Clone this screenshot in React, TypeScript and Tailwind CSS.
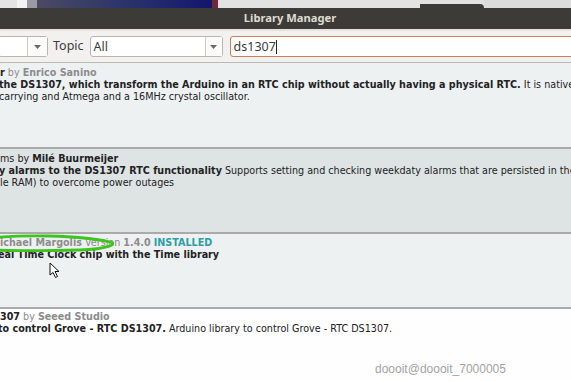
import React from "react";

function Arrow() {
  return (
    <svg width="7" height="4" viewBox="0 0 7 4" className="fill-[#6a6a6a]">
      <path d="M0 0 L7 0 L3.5 4 Z" />
    </svg>
  );
}

function Row({
  bg,
  h,
  pt,
  children,
}: {
  bg: string;
  h: string;
  pt: string;
  children: React.ReactNode;
}) {
  return (
    <div className={`${bg} ${h} ${pt} relative border-b-2 border-[#a9abab] overflow-hidden`}>
      {children}
    </div>
  );
}

export default function App() {
  const line = "h-[12px] leading-[12px] whitespace-nowrap";

  return (
    <div className="w-[571px] h-[381px] overflow-hidden relative bg-white text-[9.6px] text-[#222] [font-family:'DejaVu_Sans',sans-serif]">
      {/* desktop strip behind the window */}
      <div className="h-[8px] flex">
        <div className="w-[17px] bg-[#e4e4e4]" />
        <div className="w-[10px] bg-[#f3f3f3]" />
        <div className="w-[10px] bg-[#9a9aa2]" />
        <div className="w-[175px] bg-gradient-to-r from-[#4b4a63] to-[#14136e]" />
        <div className="w-[6px] bg-[#6b2a34]" />
        <div className="w-[266px] bg-[#e2e2e2] flex items-end">
          <div className="h-[4px] ml-[202px] w-[64px] bg-[#3c3b37] rounded-tr-[4px]" />
        </div>
        <div className="flex-1 bg-[#dcdcdc]" />
      </div>

      {/* title bar */}
      <div className="h-[21px] bg-[#3c3b37] flex items-center justify-center pl-[9px]">
        <span className="text-[11.2px] font-bold text-[#dfdbd2] [font-family:'Noto_Sans',sans-serif]">
          Library Manager
        </span>
      </div>
      <div className="h-[2px] bg-[#e6e3df]" />

      {/* toolbar */}
      <div className="h-[32px] bg-[#f2f1f0] flex items-center text-[12.5px] text-[#3c3c3c] [font-family:'Noto_Sans',sans-serif] border-b border-[#bdbab5]">
        <div className="-ml-[2px] w-[50px] h-[21px] flex bg-white border border-[#b9b6b1] rounded-[3px]">
          <div className="w-[29px] border-r border-[#cfccc8]" />
          <div className="flex-1 flex items-center justify-center bg-[#fbfbfa]">
            <Arrow />
          </div>
        </div>
        <span className="ml-[5px]">Topic</span>
        <div className="ml-[6px] w-[133px] h-[21px] flex bg-white border border-[#b9b6b1] rounded-[3px]">
          <div className="w-[115px] border-r border-[#cfccc8] pl-[3px] leading-[19px]">All</div>
          <div className="flex-1 flex items-center justify-center bg-[#fbfbfa]">
            <Arrow />
          </div>
        </div>
        <div className="ml-[7px] flex-1 -mr-[4px] h-[21px] bg-white border border-[#c5805c] rounded-[3px] pl-[3px] leading-[19px] flex items-center">
          <span>ds1307</span>
          <span className="w-[1px] h-[14px] bg-[#222]" />
        </div>
      </div>

      {/* results */}
      <Row bg="bg-[#eef1f2]" h="h-[86px]" pt="pt-[4px]">
        <div className={line}>
          <b>r</b> <span className="text-[#8c8c8c]">by</span>{" "}
          <b className="text-[#8c8c8c]">Enrico Sanino</b>
        </div>
        <div className={`${line} -ml-[1px]`}>
          <b>the DS1307, which transform the Arduino in an RTC chip without actually having a physical RTC.</b>{" "}
          It is natively supported on any Arduino
        </div>
        <div className={`${line} -ml-[1px]`}>carrying and Atmega and a 16MHz crystal oscillator.</div>
      </Row>

      <Row bg="bg-[#dee4e4]" h="h-[85px]" pt="pt-[4px]">
        <div className={line}>
          ms by <b>Milé Buurmeijer</b>
        </div>
        <div className={`${line} -ml-[1px]`}>
          <b>y alarms to the DS1307 RTC functionality</b> Supports setting and checking weekdaty alarms that are persisted in the
        </div>
        <div className={line}>le RAM) to overcome power outages</div>
      </Row>

      <Row bg="bg-[#eef1f1]" h="h-[75px]" pt="pt-[3px]">
        <div className={line}>
          <b className="text-[#8c8c8c]">ichael Margolis</b>{" "}
          <span className="text-[#8c8c8c]">Version</span>{" "}
          <b className="text-[#8c8c8c]">1.4.0</b>{" "}
          <b className="text-[#2b9ea6]">INSTALLED</b>
        </div>
        <div className={`${line} -ml-[2px]`}>
          <b>eal Time Clock chip with the Time library</b>
        </div>

        {/* hand drawn highlight */}
        <svg
          className="absolute left-0 top-0"
          width="120"
          height="24"
          viewBox="0 0 120 24"
        >
          <path
            d="M-20 5 C 20 0, 80 1, 110 8 C 118 10, 108 15, 80 16 C 40 17, 0 17, -20 15"
            fill="none"
            stroke="#3ec41e"
            strokeWidth="2.8"
            strokeLinecap="round"
          />
        </svg>

        {/* mouse pointer */}
        <svg
          className="absolute left-[49px] top-[28px]"
          width="12"
          height="17"
          viewBox="0 0 12 17"
        >
          <path
            d="M1 1 L1 13 L4 10.5 L6.5 15.5 L8.5 14.5 L6 9.5 L10 9.5 Z"
            fill="#ffffff"
            stroke="#111"
            strokeWidth="1"
            strokeLinejoin="round"
          />
        </svg>
      </Row>

      <div className="bg-[#fefefe] h-[80px] pt-[2px] relative">
        <div className={line}>
          <b>307</b> <span className="text-[#8c8c8c]">by</span>{" "}
          <b className="text-[#8c8c8c]">Seeed Studio</b>
        </div>
        <div className={`${line} -ml-[2px]`}>
          <b>to control Grove - RTC DS1307.</b> Arduino library to control Grove - RTC DS1307.
        </div>
        <div className="absolute left-[375px] top-[51px] text-[12px] text-[#a3a3a3] [font-family:'Liberation_Sans',sans-serif]">
          doooit@doooit_7000005
        </div>
      </div>
    </div>
  );
}
